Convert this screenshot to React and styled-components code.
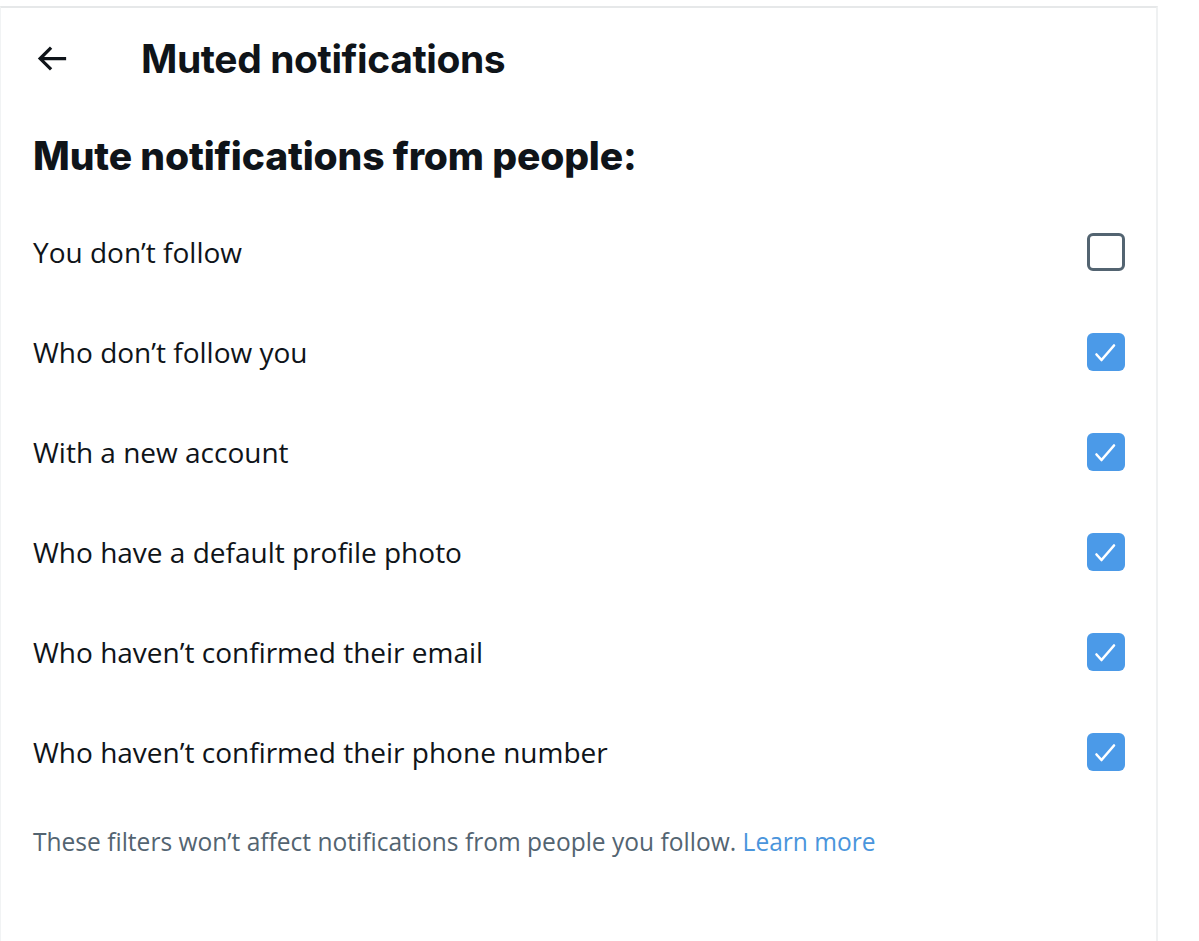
import React from "react";
import styled, { createGlobalStyle } from "styled-components";

const Global = createGlobalStyle`
  html, body { margin: 0; padding: 0; background: #ffffff; }
  body { font-family: "Open Sans", "Liberation Sans", sans-serif; color: #0f1419; }
`;

const Page = styled.div`
  margin-top: 6px;
  width: 1158px;
  min-height: 935px;
  box-sizing: border-box;
  border-top: 2px solid #e6e8e9;
  border-left: 1px solid #f1f3f4;
  border-right: 2px solid #eff1f2;
  background: #fff;
`;

const Header = styled.header`
  display: flex;
  align-items: center;
  height: 101px;
  padding-left: 31px;
`;

const BackCell = styled.div`
  width: 109px;
  display: flex;
  align-items: center;
`;

const BackButton = styled.button`
  border: 0;
  background: transparent;
  padding: 0;
  width: 39px;
  height: 39px;
  display: flex;
  align-items: center;
  justify-content: center;
  color: #0f1419;
  cursor: pointer;
`;

const Title = styled.h1`
  margin: 0;
  font-family: "Inter", "Liberation Sans", sans-serif;
  font-weight: 700;
  font-size: 39px;
  letter-spacing: -0.4px;
  color: #0f1419;
`;

const SectionTitle = styled.h2`
  margin: 0;
  padding: 21px 32px 20px 32px;
  font-family: "Inter", "Liberation Sans", sans-serif;
  font-weight: 800;
  font-size: 39px;
  line-height: 52px;
  letter-spacing: -0.15px;
  color: #0f1419;
`;

const List = styled.div`
  display: flex;
  flex-direction: column;
`;

const Row = styled.label`
  display: flex;
  align-items: center;
  justify-content: space-between;
  height: 100px;
  padding: 0 31px 0 32px;
  cursor: pointer;
`;

const RowText = styled.span`
  font-family: "Open Sans", "Liberation Sans", sans-serif;
  font-size: 28px;
  color: #0f1419;
`;

const Box = styled.span`
  width: 38px;
  height: 38px;
  box-sizing: border-box;
  border-radius: 6px;
  display: flex;
  align-items: center;
  justify-content: center;
  background: ${(p) => (p.$checked ? "#4b9ae8" : "#ffffff")};
  border: ${(p) => (p.$checked ? "none" : "3px solid #536471")};
`;

const Footer = styled.p`
  margin: 0;
  padding: 23px 32px;
  font-family: "Open Sans", "Liberation Sans", sans-serif;
  font-size: 24.55px;
  color: #536471;
`;

const Link = styled.a`
  color: #4a95dc;
  text-decoration: none;
`;

const BackIcon = () => (
  <svg width="39" height="39" viewBox="0 0 24 24" fill="currentColor">
    <path d="M7.414 13l5.043 5.04-1.414 1.42L3.586 12l7.457-7.46 1.414 1.42L7.414 11H21v2H7.414z" />
  </svg>
);

const Check = () => (
  <svg width="38" height="38" viewBox="0 0 38 38" fill="none">
    <path d="M9.5 21.5 L14.5 27 L27 12.5" stroke="#ffffff" strokeWidth="2.6" strokeLinecap="round" strokeLinejoin="round" />
  </svg>
);

const items = [
  { label: "You don’t follow", checked: false },
  { label: "Who don’t follow you", checked: true },
  { label: "With a new account", checked: true },
  { label: "Who have a default profile photo", checked: true },
  { label: "Who haven’t confirmed their email", checked: true },
  { label: "Who haven’t confirmed their phone number", checked: true },
];

export default function App() {
  return (
    <>
      <Global />
      <Page>
        <Header>
          <BackCell>
            <BackButton aria-label="Back">
              <BackIcon />
            </BackButton>
          </BackCell>
          <Title>Muted notifications</Title>
        </Header>
        <SectionTitle>Mute notifications from people:</SectionTitle>
        <List>
          {items.map((it) => (
            <Row key={it.label}>
              <RowText>{it.label}</RowText>
              <Box $checked={it.checked}>{it.checked && <Check />}</Box>
            </Row>
          ))}
        </List>
        <Footer>
          These filters won’t affect notifications from people you follow.{" "}
          <Link href="#">Learn more</Link>
        </Footer>
      </Page>
    </>
  );
}
